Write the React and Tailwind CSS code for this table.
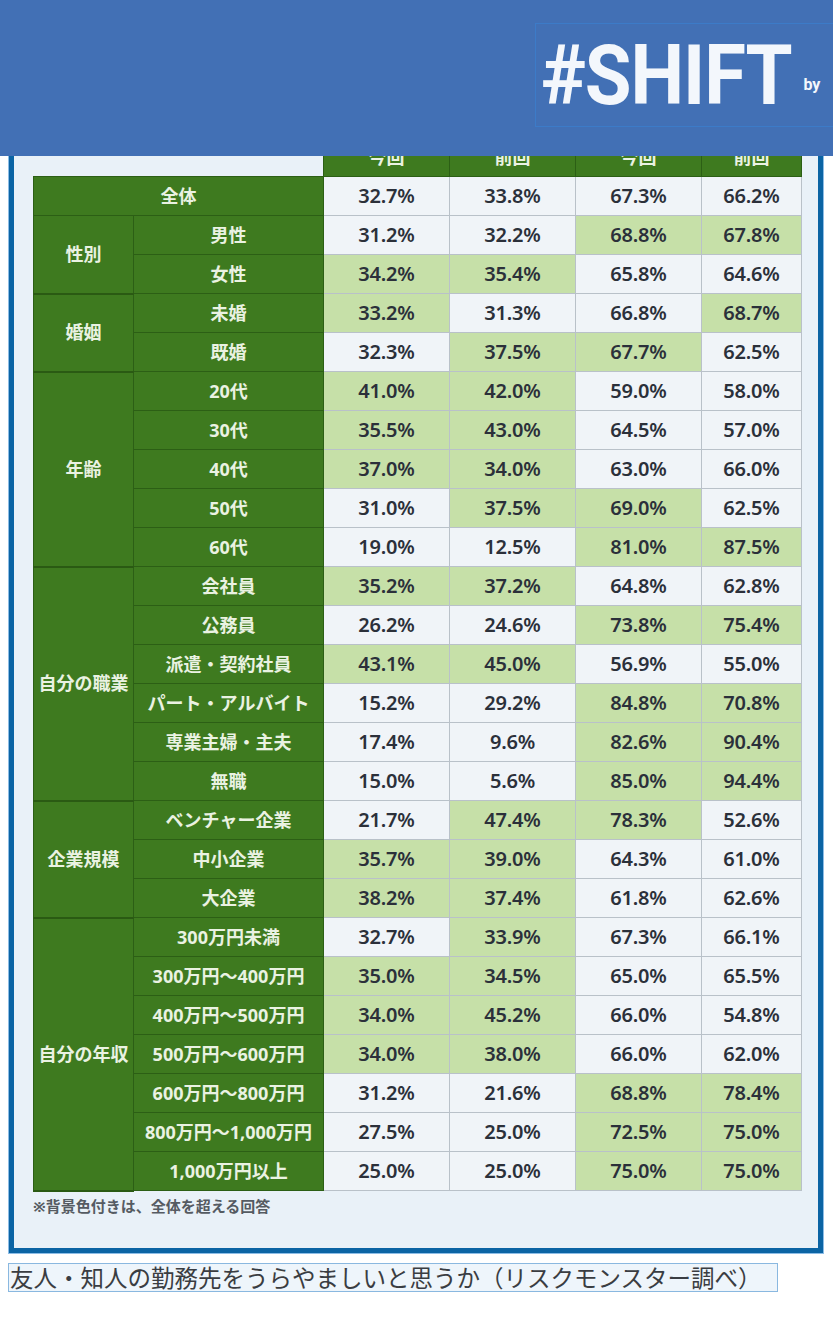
import React from 'react';

const base = [32.7, 33.8, 67.3, 66.2];

const groups = [
  { name: '性別', rows: [['男性', 31.2, 32.2, 68.8, 67.8], ['女性', 34.2, 35.4, 65.8, 64.6]] },
  { name: '婚姻', rows: [['未婚', 33.2, 31.3, 66.8, 68.7], ['既婚', 32.3, 37.5, 67.7, 62.5]] },
  {
    name: '年齢',
    rows: [
      ['20代', 41.0, 42.0, 59.0, 58.0],
      ['30代', 35.5, 43.0, 64.5, 57.0],
      ['40代', 37.0, 34.0, 63.0, 66.0],
      ['50代', 31.0, 37.5, 69.0, 62.5],
      ['60代', 19.0, 12.5, 81.0, 87.5],
    ],
  },
  {
    name: '自分の職業',
    rows: [
      ['会社員', 35.2, 37.2, 64.8, 62.8],
      ['公務員', 26.2, 24.6, 73.8, 75.4],
      ['派遣・契約社員', 43.1, 45.0, 56.9, 55.0],
      ['パート・アルバイト', 15.2, 29.2, 84.8, 70.8],
      ['専業主婦・主夫', 17.4, 9.6, 82.6, 90.4],
      ['無職', 15.0, 5.6, 85.0, 94.4],
    ],
  },
  {
    name: '企業規模',
    rows: [
      ['ベンチャー企業', 21.7, 47.4, 78.3, 52.6],
      ['中小企業', 35.7, 39.0, 64.3, 61.0],
      ['大企業', 38.2, 37.4, 61.8, 62.6],
    ],
  },
  {
    name: '自分の年収',
    rows: [
      ['300万円未満', 32.7, 33.9, 67.3, 66.1],
      ['300万円～400万円', 35.0, 34.5, 65.0, 65.5],
      ['400万円～500万円', 34.0, 45.2, 66.0, 54.8],
      ['500万円～600万円', 34.0, 38.0, 66.0, 62.0],
      ['600万円～800万円', 31.2, 21.6, 68.8, 78.4],
      ['800万円～1,000万円', 27.5, 25.0, 72.5, 75.0],
      ['1,000万円以上', 25.0, 25.0, 75.0, 75.0],
    ],
  },
];

const jp = { fontFamily: '"Noto Sans", "Noto Sans CJK JP", sans-serif' };
const logoFont = { fontFamily: 'Roboto, "Liberation Sans", sans-serif' };

const ValueCell = ({ v, i }) => (
  <td
    className={`border border-[#b9c1c9] text-center text-[20px] font-semibold text-[#2b303a] tracking-[-0.01em] ${
      v > base[i] ? 'bg-[#c6e0a8]' : 'bg-[#f0f4f8]'
    }`}
  >
    {v.toFixed(1)}%
  </td>
);

const greenCell = 'bg-[#3e7a1f] border border-[#2c5f15] text-center text-[18px] font-bold text-[#eaf2e2]';

export default function App() {
  return (
    <div className="relative w-[833px] h-[1323px] overflow-hidden bg-white" style={jp}>
      <div className="pt-[100px]">
        <div className="ml-[9px] w-[814px] h-[1153px] border-[5px] border-[#0b64a4] ring-1 ring-[#8dbde6] bg-[#e9f1f8] pt-[32px] pl-[19px]">
          <table className="w-[768px] border-collapse table-fixed">
            <colgroup>
              <col className="w-[100px]" />
              <col className="w-[190px]" />
              <col className="w-[126px]" />
              <col className="w-[126px]" />
              <col className="w-[126px]" />
              <col className="w-[100px]" />
            </colgroup>
            <tbody>
              <tr className="h-[39px]">
                <td colSpan={2}></td>
                {['今回', '前回', '今回', '前回'].map((h, i) => (
                  <td key={i} className={greenCell}>{h}</td>
                ))}
              </tr>
              <tr className="h-[39px]">
                <td colSpan={2} className={greenCell}>全体</td>
                {base.map((v, i) => (
                  <td key={i} className="border border-[#b9c1c9] bg-[#f0f4f8] text-center text-[20px] font-semibold text-[#2b303a] tracking-[-0.01em]">
                    {v.toFixed(1)}%
                  </td>
                ))}
              </tr>
              {groups.map((g) =>
                g.rows.map((r, ri) => (
                  <tr key={g.name + ri} className="h-[39px]">
                    {ri === 0 && (
                      <td rowSpan={g.rows.length} className={`${greenCell} border-b-2 border-b-[#2a5a13]`}>
                        {g.name}
                      </td>
                    )}
                    <td className={`${greenCell} whitespace-nowrap`}>{r[0]}</td>
                    {r.slice(1).map((v, i) => (
                      <ValueCell key={i} v={v} i={i} />
                    ))}
                  </tr>
                ))
              )}
            </tbody>
          </table>
          <p className="mt-[5px] text-[15px] font-bold text-[#555b62] leading-[18px]">※背景色付きは、全体を超える回答</p>
        </div>
      </div>

      <div className="mt-[10px] ml-[8px] w-[770px] h-[29px] border border-[#8ab8e0] bg-[#eef5fb] flex items-center pl-[1px]">
        <span className="text-[23.5px] leading-[27px] text-[#3a3d42] whitespace-nowrap" style={{ fontFamily: '"Noto Sans CJK JP", sans-serif' }}>
          友人・知人の勤務先をうらやましいと思うか（リスクモンスター調べ）
        </span>
      </div>

      {/* fixed header bar over the scrolled content */}
      <div className="absolute top-0 left-0 w-[833px] h-[156px] bg-[#4270b5] pt-[23px]">
        <div className="ml-[535px] w-[298px] h-[104px] border border-r-0 border-[#3c7bc8] flex items-center">
          <span className="ml-[5px] text-[76px] font-bold leading-none tracking-[-0.015em] text-[#f3f7fc] scale-y-[1.1]" style={logoFont}>
            #SHIFT
          </span>
          <span className="ml-[12px] mt-[20px] text-[16px] font-bold leading-none text-[#f3f7fc]" style={logoFont}>
            by
          </span>
        </div>
      </div>
    </div>
  );
}
